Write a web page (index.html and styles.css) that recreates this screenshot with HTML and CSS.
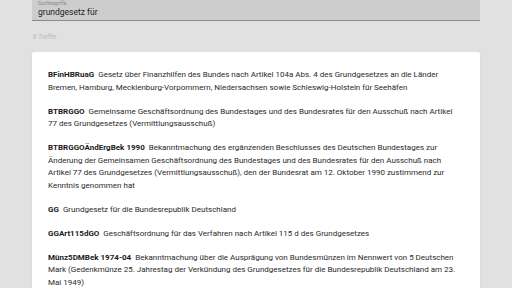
FILE: index.html
```html
<!DOCTYPE html>
<html lang="de">
<head>
<meta charset="utf-8">
<link rel="stylesheet" href="styles.css">
</head>
<body>
<div class="page">
  <div class="search">
    <div class="label">Suchbegriffe</div>
    <div class="value">grundgesetz für</div>
  </div>
  <div class="count">6 Treffer</div>
  <div class="card">
    <p class="item"><b>BFinHBRuaG</b> Gesetz über Finanzhilfen des Bundes nach Artikel 104a Abs. 4 des Grundgesetzes an die Länder Bremen, Hamburg, Mecklenburg-Vorpommern, Niedersachsen sowie Schleswig-Holstein für Seehäfen</p>
    <p class="item"><b>BTBRGGO</b> Gemeinsame Geschäftsordnung des Bundestages und des Bundesrates für den Ausschuß nach Artikel 77 des Grundgesetzes (Vermittlungsausschuß)</p>
    <p class="item"><b>BTBRGGOÄndErgBek 1990</b> Bekanntmachung des ergänzenden Beschlusses des Deutschen Bundestages zur Änderung der Gemeinsamen Geschäftsordnung des Bundestages und des Bundesrates für den Ausschuß nach Artikel 77 des Grundgesetzes (Vermittlungsausschuß), den der Bundesrat am 12. Oktober 1990 zustimmend zur Kenntnis genommen hat</p>
    <p class="item"><b>GG</b> Grundgesetz für die Bundesrepublik Deutschland</p>
    <p class="item"><b>GGArt115dGO</b> Geschäftsordnung für das Verfahren nach Artikel 115 d des Grundgesetzes</p>
    <p class="item"><b>Münz5DMBek 1974-04</b> Bekanntmachung über die Ausprägung von Bundesmünzen im Nennwert von 5 Deutschen Mark (Gedenkmünze 25. Jahrestag der Verkündung des Grundgesetzes für die Bundesrepublik Deutschland am 23. Mai 1949)</p>
  </div>
</div>
</body>
</html>
```
FILE: styles.css
```css
html, body {
  margin: 0;
  padding: 0;
  background: #e1e1e1;
  height: 100%;
  overflow: hidden;
}
body {
  font-family: Roboto, "Noto Sans", sans-serif;
  color: #222;
}
.page {
  margin: 0 32px;
  display: flex;
  flex-direction: column;
}
.search {
  background: #cdcdcd;
  border-bottom: 1px solid #8c8c8c;
  height: 21px;
  padding: 0 6px;
  box-sizing: border-box;
}
.label {
  font-size: 5px;
  color: #8a8a8a;
  line-height: 6px;
}
.value {
  font-size: 8.5px;
  line-height: 12px;
  color: #1e1e1e;
}
.count {
  font-size: 6.5px;
  font-style: italic;
  color: #b8b8b8;
  padding: 12px 1px 0;
  height: 31px;
  box-sizing: border-box;
}
.card {
  background: #fff;
  border-radius: 2px;
  padding: 17px 21px 17px 16px;
  box-shadow: 0 1px 2px rgba(0,0,0,0.08);
}
.item {
  margin: 0 0 11.5px;
  font-size: 8px;
  line-height: 12.5px;
  color: #2a2a2a;
}
.item b {
  font-weight: 700;
  color: #1a1a1a;
  margin-right: 2px;
}
```
